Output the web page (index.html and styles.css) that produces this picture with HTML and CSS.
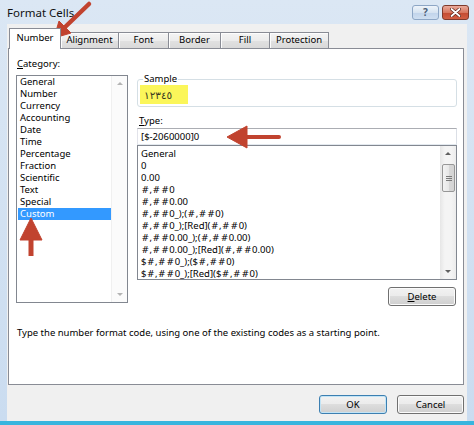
FILE: index.html
```html
<!DOCTYPE html>
<html>
<head>
<meta charset="utf-8">
<link rel="stylesheet" href="styles.css">
</head>
<body>
<div class="window">
  <div class="titlebar">
    <span class="title">Format Cells</span>
    <div class="caption-btns">
      <div class="cap-btn help">?</div>
      <div class="cap-btn close">
        <svg width="11" height="9" viewBox="0 0 11 9"><path d="M1.5 1 L9.5 8 M9.5 1 L1.5 8" stroke="#5a1f14" stroke-width="3.2" stroke-linecap="round"/><path d="M1.5 1 L9.5 8 M9.5 1 L1.5 8" stroke="#ffffff" stroke-width="1.8" stroke-linecap="round"/></svg>
      </div>
    </div>
  </div>
  <div class="client">
    <div class="tabs">
      <div class="tab active w-number">Number</div>
      <div class="tab w-align">Alignment</div>
      <div class="tab w-font">Font</div>
      <div class="tab w-border">Border</div>
      <div class="tab w-fill">Fill</div>
      <div class="tab w-prot">Protection</div>
    </div>
    <div class="panel">
      <div class="left-col">
        <div class="cat-label"><u>C</u>ategory:</div>
        <div class="listbox cat-list">
          <ul class="items cat-items">
            <li>General</li>
            <li>Number</li>
            <li>Currency</li>
            <li>Accounting</li>
            <li>Date</li>
            <li>Time</li>
            <li>Percentage</li>
            <li>Fraction</li>
            <li>Scientific</li>
            <li>Text</li>
            <li>Special</li>
            <li class="selected">Custom</li>
          </ul>
          <div class="vscroll light">
            <svg class="arr" width="16" height="16" viewBox="0 0 16 16"><path d="M5 9 L8 6 L11 9 Z" fill="#b4b4b4"/></svg>
            <svg class="arr" width="16" height="16" viewBox="0 0 16 16"><path d="M5 7 L8 10 L11 7 Z" fill="#b4b4b4"/></svg>
          </div>
        </div>
      </div>
      <div class="right-col">
        <fieldset class="sample">
          <legend>Sample</legend>
          <div class="hl">١٢٣٤٥</div>
        </fieldset>
        <div class="type-label"><u>T</u>ype:</div>
        <div class="textbox">[$-2060000]0</div>
        <div class="listbox fmt-list">
          <ul class="items fmt-items">
            <li>General</li>
            <li>0</li>
            <li>0.00</li>
            <li><span class="h">#</span>,<span class="h">#</span><span class="h">#</span>0</li>
            <li><span class="h">#</span>,<span class="h">#</span><span class="h">#</span>0.00</li>
            <li><span class="h">#</span>,<span class="h">#</span><span class="h">#</span>0_);(<span class="h">#</span>,<span class="h">#</span><span class="h">#</span>0)</li>
            <li><span class="h">#</span>,<span class="h">#</span><span class="h">#</span>0_);[Red](<span class="h">#</span>,<span class="h">#</span><span class="h">#</span>0)</li>
            <li><span class="h">#</span>,<span class="h">#</span><span class="h">#</span>0.00_);(<span class="h">#</span>,<span class="h">#</span><span class="h">#</span>0.00)</li>
            <li><span class="h">#</span>,<span class="h">#</span><span class="h">#</span>0.00_);[Red](<span class="h">#</span>,<span class="h">#</span><span class="h">#</span>0.00)</li>
            <li>$<span class="h">#</span>,<span class="h">#</span><span class="h">#</span>0_);($<span class="h">#</span>,<span class="h">#</span><span class="h">#</span>0)</li>
            <li>$<span class="h">#</span>,<span class="h">#</span><span class="h">#</span>0_);[Red]($<span class="h">#</span>,<span class="h">#</span><span class="h">#</span>0)</li>
          </ul>
          <div class="vscroll track">
            <svg class="arr" width="16" height="16" viewBox="0 0 16 16"><path d="M5 9 L8 6 L11 9 Z" fill="#606060"/></svg>
            <div class="thumb"><span></span><span></span><span></span></div>
            <div class="spacer"></div>
            <svg class="arr" width="16" height="16" viewBox="0 0 16 16"><path d="M5 7 L8 10 L11 7 Z" fill="#606060"/></svg>
          </div>
        </div>
        <div class="delete-row"><button class="btn delete"><u>D</u>elete</button></div>
      </div>
      <p class="desc">Type the number format code, using one of the existing codes as a starting point.</p>
    </div>
    <div class="footer">
      <button class="btn default">OK</button>
      <button class="btn">Cancel</button>
    </div>
  </div>
  <svg class="annotations" width="474" height="425" viewBox="0 0 474 425">
    <g fill="#c1432f" stroke="#c1432f">
      <line x1="89" y1="4" x2="63" y2="29" stroke-width="4.5" stroke-linecap="round"/>
      <polygon points="54,38 71,33 59,21" stroke-width="1" stroke-linejoin="round"/>
      <line x1="245" y1="137" x2="279" y2="137" stroke-width="4" stroke-linecap="round"/>
      <polygon points="227,137 247,126 247,148" stroke-width="1" stroke-linejoin="round"/>
      <line x1="31" y1="238" x2="31" y2="256" stroke-width="5"/>
      <polygon points="31,218 20,240 42,240" stroke-width="1" stroke-linejoin="round"/>
    </g>
  </svg>
</div>
</body>
</html>
```
FILE: styles.css
```css
* { box-sizing: border-box; }
html, body { margin: 0; padding: 0; }
body {
  width: 474px;
  height: 425px;
  overflow: hidden;
  font-family: "Noto Sans", "Open Sans", sans-serif;
  font-size: 9.5px;
  line-height: 12px;
  color: #000;
}
.window {
  position: relative;
  width: 474px;
  height: 425px;
  background: linear-gradient(#dbe7f4, #cadcf0);
  border-bottom: 4px solid #38b5de;
  display: flex;
  flex-direction: column;
}
.titlebar {
  height: 24px;
  flex: none;
  display: flex;
  justify-content: space-between;
  align-items: flex-start;
  padding: 0 5px 0 7px;
}
.title {
  font-size: 11.5px;
  line-height: 14px;
  margin-top: 6px;
  color: #111;
}
.caption-btns { display: flex; gap: 3px; margin-top: 5px; }
.cap-btn {
  width: 27px;
  height: 15px;
  border-radius: 3px;
  display: flex;
  align-items: center;
  justify-content: center;
}
.help {
  background: linear-gradient(#eef4fa 0%, #d6e3f1 50%, #c0d3ea 51%, #cfdff1 100%);
  border: 1px solid #8da6c5;
  color: #4a5d77;
  font-weight: bold;
  font-size: 10px;
  line-height: 13px;
}
.close {
  background: linear-gradient(#eaaa9b 0%, #d8775f 50%, #c34a31 51%, #d35f43 100%);
  border: 1px solid #7e3a2c;
}
.client {
  flex: 1;
  margin: 0 7px;
  background: #f0f0f0;
  display: flex;
  flex-direction: column;
  padding: 0 3px 0 1px;
}
.tabs {
  height: 24px;
  flex: none;
  display: flex;
  align-items: flex-end;
  padding-left: 1px;
}
.tab {
  height: 16px;
  margin-right: -1px;
  border: 1px solid #898c95;
  border-bottom: none;
  background: linear-gradient(#f4f4f4 0%, #ececec 50%, #e1e1e1 51%, #d9d9d9 100%);
  box-shadow: inset 1px 1px 0 #fdfdfd;
  text-align: center;
  line-height: 14px;
}
.tab.active {
  position: relative;
  z-index: 1;
  height: 21px;
  margin-bottom: -1px;
  background: #fff;
  box-shadow: none;
  line-height: 17px;
}
.w-number { width: 52px; }
.w-align { width: 59px; }
.w-font { width: 51px; }
.w-border { width: 53px; }
.w-fill { width: 50px; }
.w-prot { width: 60px; }
.panel {
  height: 337px;
  flex: none;
  border: 1px solid #898c95;
  background: #fff;
  display: grid;
  grid-template-columns: 112px 320px;
  column-gap: 9px;
  align-content: start;
  padding: 9px 0 0 7px;
}
.cat-label { padding-left: 1px; height: 12px; }
.listbox {
  border: 1px solid #828790;
  background: #fff;
  display: flex;
  overflow: hidden;
}
.cat-list { margin-top: 5px; height: 228px; }
.items {
  list-style: none;
  margin: 0;
  flex: 1;
  min-width: 0;
  white-space: nowrap;
}
.items li { height: 12px; line-height: 12px; }
.cat-items { padding: 0; }
.cat-items li { margin-left: 1px; padding-left: 2px; }
.cat-items li.selected { background: #3399ff; color: #fff; }
.vscroll {
  width: 16px;
  flex: none;
  display: flex;
  flex-direction: column;
  justify-content: space-between;
}
.vscroll .arr { display: block; flex: none; }
.vscroll.light { background: #fbfbfb; border-left: 1px solid #f0f0f0; }
.vscroll.track {
  background: linear-gradient(90deg, #e6e6e6, #f4f4f4 30%, #f4f4f4 70%, #ececec);
  justify-content: flex-start;
}
.thumb {
  margin: 2px 1px 0 2px;
  height: 28px;
  border: 1px solid #979797;
  border-radius: 2px;
  background: linear-gradient(90deg, #f3f3f3, #e8e8e8 50%, #d8d8d8 51%, #d4d4d4);
  display: flex;
  flex-direction: column;
  align-items: center;
  justify-content: center;
  gap: 1px;
}
.thumb span { display: block; width: 6px; height: 1px; background: #7a7a7a; }
.spacer { flex: 1; }
.right-col { min-width: 0; }
.sample {
  margin: 15px 0 0 0;
  padding: 0 0 2px 2px;
  border: 1px solid #d5dfe5;
  border-radius: 3px;
  min-width: 0;
}
.sample legend {
  padding: 0 1px;
  margin-left: 3px;
  line-height: 12px;
  font-size: 9.5px;
}
.hl {
  width: 48px;
  height: 19px;
  background: #fbf65a;
  font-family: "DejaVu Sans", sans-serif;
  font-size: 10.5px;
  line-height: 20px;
  padding-left: 4px;
  color: #3a3a22;
}
.type-label { margin-top: 8px; padding-left: 2px; height: 12px; }
.textbox {
  margin-top: 1px;
  height: 17px;
  border: 1px solid;
  border-color: #abadb3 #dbdfe6 #e3e9ef #e2e3ea;
  background: #fff;
  padding-left: 3px;
  line-height: 15px;
}
.fmt-list { height: 135px; }
.fmt-items { padding: 2px 0 0 3px; }
.h {
  font-family: "DejaVu Sans", sans-serif;
  font-size: 9px;
  padding: 0 0.5px;
}
.delete-row {
  display: flex;
  justify-content: flex-end;
  margin-top: 7px;
  padding-right: 1px;
}
.btn {
  height: 19px;
  padding: 0;
  font-family: inherit;
  font-size: 9.5px;
  line-height: 15px;
  color: #000;
  border: 1px solid #707070;
  border-radius: 3px;
  background: linear-gradient(#f2f2f2 0%, #ebebeb 49%, #dddddd 50%, #cfcfcf 100%);
  box-shadow: inset 0 0 0 1px #fbfbfb;
}
.delete { width: 68px; }
.desc {
  grid-column: 1 / -1;
  margin: 21px 0 0 1px;
  line-height: 12px;
}
.footer {
  display: flex;
  justify-content: flex-end;
  gap: 10px;
  margin-top: 10px;
}
.footer .btn { width: 68px; }
.footer .btn + .btn { width: 67px; }
.btn.default {
  border-color: #3c7fb1;
  box-shadow: inset 0 0 0 1px #c2e4f6;
}
.annotations {
  position: absolute;
  left: 0;
  top: 0;
  pointer-events: none;
}
```
